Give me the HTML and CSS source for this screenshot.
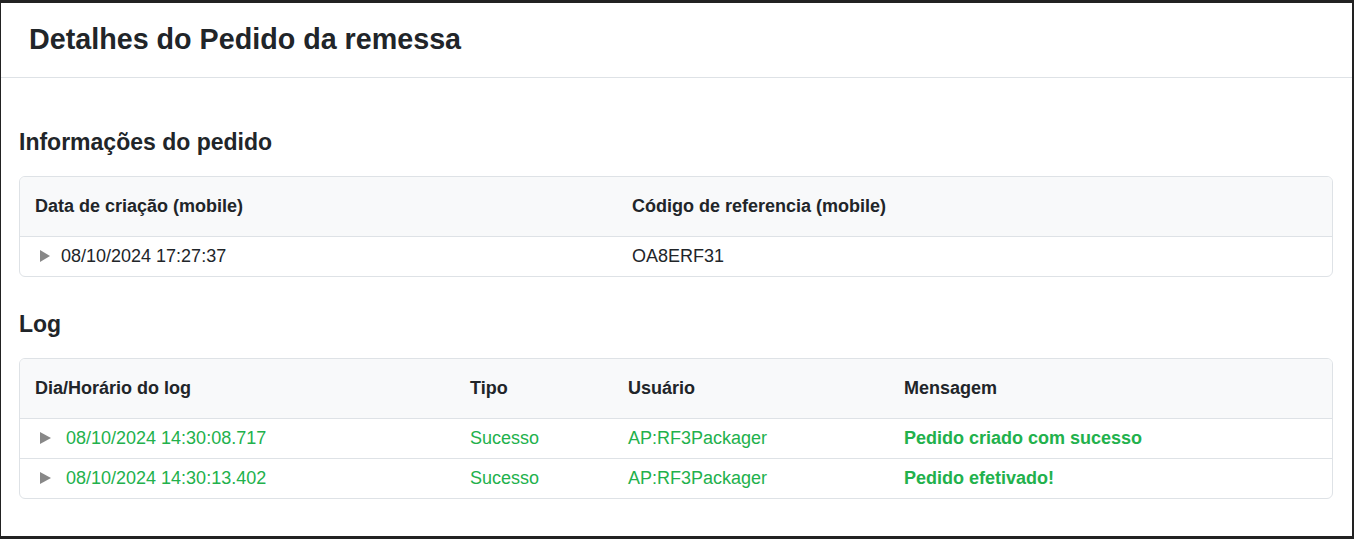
FILE: index.html
```html
<!DOCTYPE html>
<html lang="pt">
<head>
<meta charset="utf-8">
<title>Detalhes do Pedido da remessa</title>
<link rel="stylesheet" href="styles.css">
</head>
<body>
<div class="modal">
  <div class="modal-header">
    <h1 class="modal-title">Detalhes do Pedido da remessa</h1>
  </div>
  <div class="modal-body">
    <h2 class="section-title first">Informações do pedido</h2>
    <div class="card">
      <table class="tbl info">
        <colgroup><col class="c-info1"><col></colgroup>
        <thead>
          <tr><th>Data de criação (mobile)</th><th>Código de referencia (mobile)</th></tr>
        </thead>
        <tbody>
          <tr><td><span class="caret"></span>08/10/2024 17:27:37</td><td>OA8ERF31</td></tr>
        </tbody>
      </table>
    </div>
    <h2 class="section-title">Log</h2>
    <div class="card">
      <table class="tbl log">
        <colgroup><col class="c-log1"><col class="c-log2"><col class="c-log3"><col></colgroup>
        <thead>
          <tr><th>Dia/Horário do log</th><th>Tipo</th><th>Usuário</th><th>Mensagem</th></tr>
        </thead>
        <tbody>
          <tr class="ok"><td><span class="caret wide"></span>08/10/2024 14:30:08.717</td><td>Sucesso</td><td>AP:RF3Packager</td><td class="msg">Pedido criado com sucesso</td></tr>
          <tr class="ok"><td><span class="caret wide"></span>08/10/2024 14:30:13.402</td><td>Sucesso</td><td>AP:RF3Packager</td><td class="msg">Pedido efetivado!</td></tr>
        </tbody>
      </table>
    </div>
  </div>
</div>
</body>
</html>
```
FILE: styles.css
```css
html, body {
  margin: 0;
  padding: 0;
  background: #222222;
  height: 539px;
  overflow: hidden;
}
body {
  padding: 3px 0 0 1px;
  font-family: "Liberation Sans", Arial, sans-serif;
  color: #212529;
}
.modal {
  width: 1351px;
  height: 533px;
  background: #ffffff;
  box-sizing: border-box;
}
.modal-header {
  height: 75px;
  box-sizing: border-box;
  border-bottom: 1px solid #dee2e6;
  display: flex;
  align-items: center;
  padding: 0 28px;
}
.modal-title {
  margin: 0;
  font-size: 28.7px;
  font-weight: bold;
  line-height: 1.2;
  color: #212529;
  padding-bottom: 2px;
}
.modal-body {
  padding: 0 18px;
}
.section-title {
  margin: 35px 0 22px;
  font-size: 23px;
  font-weight: bold;
  line-height: 24px;
  color: #212529;
}
.section-title.first {
  margin-top: 52px;
}
.card {
  border: 1px solid #dee2e6;
  border-radius: 6px;
  overflow: hidden;
  width: 1314px;
  box-sizing: border-box;
}
.tbl {
  width: 100%;
  border-collapse: collapse;
  table-layout: fixed;
  font-size: 18px;
}
.c-info1 { width: 597px; }
.c-log1 { width: 435px; }
.c-log2 { width: 158px; }
.c-log3 { width: 276px; }
.tbl th {
  background: #f8f9fa;
  text-align: left;
  font-weight: bold;
  height: 59px;
  padding: 0 15px;
  border-bottom: 1px solid #dee2e6;
  white-space: nowrap;
}
.tbl td {
  height: 40px;
  padding: 0 15px;
  white-space: nowrap;
  box-sizing: border-box;
}
.tbl.info td {
  height: 39px;
}
.tbl tbody tr + tr td {
  border-top: 1px solid #dee2e6;
}
.caret {
  display: inline-block;
  width: 0;
  height: 0;
  border-top: 6px solid transparent;
  border-bottom: 6px solid transparent;
  border-left: 10px solid #888888;
  margin: 0 11px 0 5px;
  vertical-align: 0;
}
.caret.wide {
  border-left-width: 11px;
  margin-right: 15px;
}
.ok td { color: #22b14c; }
.ok td.msg { font-weight: bold; }
```
